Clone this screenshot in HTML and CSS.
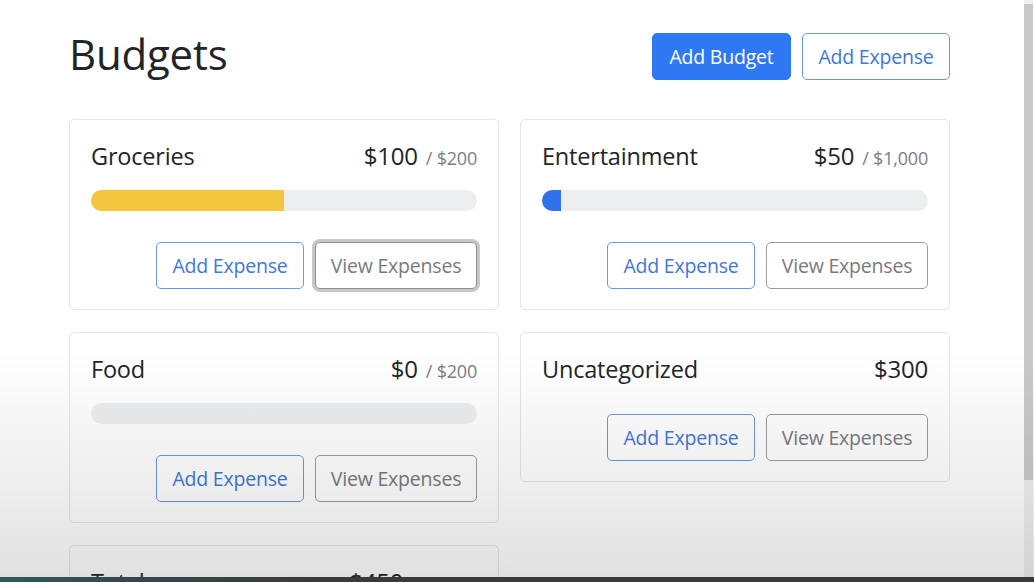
FILE: index.html
```html
<!DOCTYPE html>
<html lang="en">
<head>
<meta charset="utf-8">
<title>Budgets</title>
<link rel="stylesheet" href="styles.css">
</head>
<body>
<div class="page">
  <main class="container">
    <header class="header">
      <h1 class="title">Budgets</h1>
      <div class="actions">
        <button class="btn btn-primary">Add Budget</button>
        <button class="btn btn-outline-primary">Add Expense</button>
      </div>
    </header>
    <section class="grid">
      <div class="col">
        <div class="card">
          <div class="card-head">
            <span class="name">Groceries</span>
            <span class="amount">$100<span class="max">/ $200</span></span>
          </div>
          <div class="progress"><div class="bar bar-warning" style="width:50%"></div></div>
          <div class="card-actions">
            <button class="btn btn-outline-primary">Add Expense</button>
            <button class="btn btn-outline-secondary focused">View Expenses</button>
          </div>
        </div>
        <div class="card">
          <div class="card-head">
            <span class="name">Food</span>
            <span class="amount">$0<span class="max">/ $200</span></span>
          </div>
          <div class="progress"></div>
          <div class="card-actions">
            <button class="btn btn-outline-primary">Add Expense</button>
            <button class="btn btn-outline-secondary">View Expenses</button>
          </div>
        </div>
        <div class="card">
          <div class="card-head">
            <span class="name">Total</span>
            <span class="amount">$450<span class="max">/ $1,400</span></span>
          </div>
        </div>
      </div>
      <div class="col">
        <div class="card">
          <div class="card-head">
            <span class="name">Entertainment</span>
            <span class="amount">$50<span class="max">/ $1,000</span></span>
          </div>
          <div class="progress"><div class="bar bar-primary" style="width:5%"></div></div>
          <div class="card-actions">
            <button class="btn btn-outline-primary">Add Expense</button>
            <button class="btn btn-outline-secondary">View Expenses</button>
          </div>
        </div>
        <div class="card">
          <div class="card-head card-head-spaced">
            <span class="name">Uncategorized</span>
            <span class="amount">$300</span>
          </div>
          <div class="card-actions">
            <button class="btn btn-outline-primary">Add Expense</button>
            <button class="btn btn-outline-secondary">View Expenses</button>
          </div>
        </div>
      </div>
    </section>
  </main>
  <div class="scrollbar"><div class="thumb"></div></div>
  <div class="fade"></div>
  <div class="player-bar"></div>
</div>
</body>
</html>
```
FILE: styles.css
```css
html, body {
  margin: 0;
  height: 100%;
  overflow: hidden;
  background: #fff;
}
body {
  font-family: "Open Sans", "Noto Sans", sans-serif;
  color: #212529;
}
.page {
  position: relative;
  height: 582px;
  overflow: hidden;
}
.container {
  width: 881px;
  padding: 33px 0 0 69px;
}
.header {
  display: flex;
  justify-content: space-between;
  align-items: center;
  height: 47px;
  margin-bottom: 39px;
}
.title {
  margin: 0;
  font-size: 42px;
  font-weight: 500;
  line-height: 1;
  position: relative;
  top: -3px;
  letter-spacing: -0.2px;
}
.actions {
  display: flex;
  gap: 11px;
}
.btn {
  font-family: inherit;
  font-size: 19.5px;
  line-height: 30px;
  height: 47px;
  padding: 7px 10px;
  border-radius: 5px;
  border: 1px solid transparent;
  background: #fff;
  cursor: pointer;
  box-sizing: border-box;
  letter-spacing: -0.2px;
  white-space: nowrap;
}
.btn-primary {
  background: #2f78f3;
  border-color: #2f78f3;
  color: #fff;
  width: 139px;
}
.btn-outline-primary {
  color: #3f77da;
  border-color: #6c97e2;
  width: 148px;
}
.btn-outline-secondary {
  color: #777b80;
  border-color: #9a9d9f;
  width: 162px;
}
.focused {
  border-color: #8d8f92;
  box-shadow: 0 0 0 3px rgba(160, 163, 166, 0.6);
}
.grid {
  display: grid;
  grid-template-columns: 430px 430px;
  column-gap: 21px;
}
.col {
  display: flex;
  flex-direction: column;
  gap: 22px;
}
.card {
  border: 1px solid #e3e5e7;
  border-radius: 5px;
  padding: 21px 21px 20px;
  background: #fff;
}
.card-head {
  display: flex;
  justify-content: space-between;
  align-items: baseline;
  height: 29px;
  margin-bottom: 20px;
}
.card-head-spaced {
  margin-bottom: 31px;
}
.name, .amount {
  font-size: 23.5px;
  line-height: 29px;
  letter-spacing: -0.2px;
}
.amount {
  font-size: 24px;
}
.max {
  font-size: 18px;
  color: #7b8085;
  margin-left: 8px;
}
.progress {
  height: 21px;
  border-radius: 11px;
  background: #eceef0;
  overflow: hidden;
  margin-bottom: 31px;
}
.bar {
  height: 100%;
}
.bar-warning {
  background: #f4c63f;
}
.bar-primary {
  background: #2f72ec;
}
.card-actions {
  display: flex;
  justify-content: flex-end;
  gap: 11px;
}
.scrollbar {
  position: absolute;
  top: 0;
  right: 1px;
  width: 9px;
  height: 577px;
  background: #f0f0f0;
}
.thumb {
  margin-top: 4px;
  height: 476px;
  background: #c9c9c9;
}
.fade {
  position: absolute;
  left: 0;
  right: 0;
  bottom: 0;
  height: 230px;
  background: linear-gradient(to bottom, rgba(0,0,0,0) 0%, rgba(0,0,0,0.06) 50%, rgba(0,0,0,0.12) 100%);
  pointer-events: none;
}
.player-bar {
  position: absolute;
  left: 0;
  right: 0;
  bottom: 0;
  height: 5px;
  background: linear-gradient(to right, #2c5b5a 0%, #35494a 12%, #3a3a3a 30%, #3a3a3a 100%);
}
```
